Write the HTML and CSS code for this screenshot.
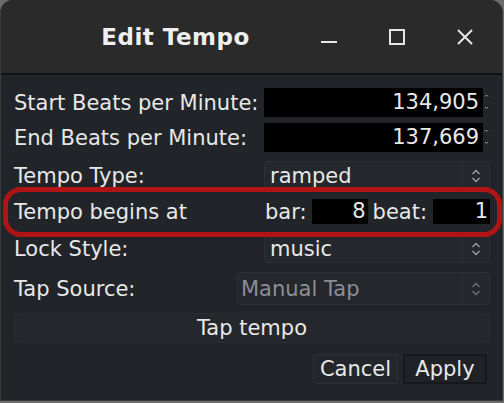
FILE: index.html
```html
<!DOCTYPE html>
<html lang="en">
<head>
<meta charset="utf-8">
<title>Edit Tempo</title>
<link rel="stylesheet" href="styles.css">
</head>
<body>
<div class="window">
  <header class="titlebar">
    <div class="title">Edit Tempo</div>
    <div class="wbtns">
      <svg class="wicon" width="16" height="16" viewBox="0 0 16 16"><path d="M0 13h16" stroke="#e6e6e6" stroke-width="2" fill="none"/></svg>
      <svg class="wicon" width="16" height="16" viewBox="0 0 16 16"><rect x="1" y="1" width="14" height="14" stroke="#e6e6e6" stroke-width="2" fill="none"/></svg>
      <svg class="wicon" width="16" height="16" viewBox="0 0 16 16"><path d="M1 1L15 15M15 1L1 15" stroke="#e6e6e6" stroke-width="2" fill="none"/></svg>
    </div>
  </header>
  <main class="content">
    <div class="row r1">
      <span class="lbl">Start Beats per Minute:</span>
      <div class="spin">
        <div class="num">134,905</div>
        <svg class="sarrows" width="7" height="29" viewBox="0 0 7 29"><path d="M2 8.5l1.5-1.5 1.5 1.5M2 19l1.5 1.5 1.5-1.5" stroke="#9aa0a6" stroke-width="1" fill="none"/></svg>
      </div>
    </div>
    <div class="row r2">
      <span class="lbl">End Beats per Minute:</span>
      <div class="spin">
        <div class="num">137,669</div>
        <svg class="sarrows" width="7" height="29" viewBox="0 0 7 29"><path d="M2 8.5l1.5-1.5 1.5 1.5M2 19l1.5 1.5 1.5-1.5" stroke="#9aa0a6" stroke-width="1" fill="none"/></svg>
      </div>
    </div>
    <div class="row r3">
      <span class="lbl">Tempo Type:</span>
      <div class="combo">
        <span class="ctext">ramped</span>
        <span class="carrow"><svg width="10" height="14" viewBox="0 0 10 14"><path d="M1.5 5L5 1.5 8.5 5M1.5 9L5 12.5 8.5 9" stroke="#9aa0a6" stroke-width="1.4" fill="none"/></svg></span>
      </div>
    </div>
    <div class="row r4">
      <span class="lbl">Tempo begins at</span>
      <span class="sub">bar:</span>
      <div class="num small bar">8</div>
      <span class="sub beat">beat:</span>
      <div class="num small last">1</div>
    </div>
    <div class="row r5">
      <span class="lbl">Lock Style:</span>
      <div class="combo">
        <span class="ctext">music</span>
        <span class="carrow"><svg width="10" height="14" viewBox="0 0 10 14"><path d="M1.5 5L5 1.5 8.5 5M1.5 9L5 12.5 8.5 9" stroke="#9aa0a6" stroke-width="1.4" fill="none"/></svg></span>
      </div>
    </div>
    <div class="row r6">
      <span class="lbl lbl-short">Tap Source:</span>
      <div class="combo disabled">
        <span class="ctext">Manual Tap</span>
        <span class="carrow"><svg width="10" height="14" viewBox="0 0 10 14"><path d="M1.5 5L5 1.5 8.5 5M1.5 9L5 12.5 8.5 9" stroke="#6c7177" stroke-width="1.4" fill="none"/></svg></span>
      </div>
    </div>
    <div class="tapbtn">Tap tempo</div>
    <div class="actions">
      <div class="btn">Cancel</div>
      <div class="btn btn-apply">Apply</div>
    </div>
  </main>
</div>
</body>
</html>
```

FILE: styles.css
```css
* { box-sizing: border-box; }
html, body {
  margin: 0;
  padding: 0;
}
body {
  width: 504px;
  height: 403px;
  background: #6b6b6b;
  font-family: "DejaVu Sans", sans-serif;
  font-size: 21px;
  color: #e8e8e8;
  overflow: hidden;
}
.window {
  width: 503px;
  height: 401px;
  background: #212429;
  border: 1px solid #3a3a3a;
  border-top: none;
  border-radius: 13px 13px 0 0;
  overflow: hidden;
  display: flex;
  flex-direction: column;
}
.titlebar {
  height: 75px;
  flex: none;
  background: #2a2a2a;
  border-bottom: 2px solid #121212;
  display: flex;
  align-items: center;
}
.title {
  flex: 1;
  text-align: center;
  padding-left: 29px;
  font-family: "DejaVu Sans", sans-serif;
  font-weight: 700;
  font-size: 23px;
  color: #efefef;
  letter-spacing: 0.5px;
}
.wbtns {
  display: flex;
  align-items: center;
  gap: 52px;
  padding-right: 29px;
}
.wicon { display: block; }

.content {
  flex: 1;
  padding: 13px 12px 0 13px;
  display: flex;
  flex-direction: column;
}
.row {
  display: flex;
  align-items: center;
  height: 29px;
}
.r2 { margin-top: 6px; }
.r3 { margin-top: 9px; }
.r4 { margin-top: 2px; height: 39px; position: relative; }
.r5 { margin-top: 3px; }
.r6 { margin-top: 9px; height: 33px; }
.r4::after {
  content: "";
  position: absolute;
  left: -11px;
  right: -12px;
  top: -5px;
  bottom: -6px;
  border: 5px solid #b01414;
  border-radius: 18px;
  pointer-events: none;
}
.lbl {
  width: 250px;
  flex: none;
  white-space: nowrap;
}
.lbl-short { width: 223px; }

.spin {
  flex: 1;
  display: flex;
  height: 29px;
}
.num {
  flex: 1;
  background: #000;
  text-align: right;
  padding-right: 4px;
  line-height: 29px;
}
.sarrows { flex: none; display: block; }
.combo {
  flex: 1;
  height: 100%;
  display: flex;
  background: #24272c;
  border: 1px solid #2d3035;
  border-radius: 4px;
}
.ctext {
  flex: 1;
  padding-left: 5px;
  display: flex;
  align-items: center;
}
.carrow {
  width: 27px;
  border-left: 1px solid #2d3035;
  display: flex;
  align-items: center;
  justify-content: center;
}
.carrow svg { display: block; }
.disabled .ctext { color: #898e95; padding-left: 3px; }

.sub { flex: none; margin-left: 1px; }
.num.small {
  flex: none;
  height: 25px;
  line-height: 25px;
  padding-right: 2px;
}
.bar { width: 56px; margin-left: 5px; }
.beat { margin-left: 5px; margin-right: 6px; }
.num.small.last { flex: 1; }

.tapbtn {
  margin-top: 8px;
  height: 30px;
  background: #24272b;
  border: 1px solid #2b2e33;
  border-radius: 4px;
  display: flex;
  align-items: center;
  justify-content: center;
}
.actions {
  margin-top: 11px;
  display: flex;
  justify-content: flex-end;
  gap: 5px;
  padding-right: 3px;
}
.btn {
  height: 30px;
  width: 85px;
  background: #23262a;
  border: 1px solid #2d3035;
  border-radius: 3px;
  display: flex;
  align-items: center;
  justify-content: center;
}
.btn-apply {
  width: 84px;
  background: #1f2226;
  border: 2px solid #16181b;
}
```
